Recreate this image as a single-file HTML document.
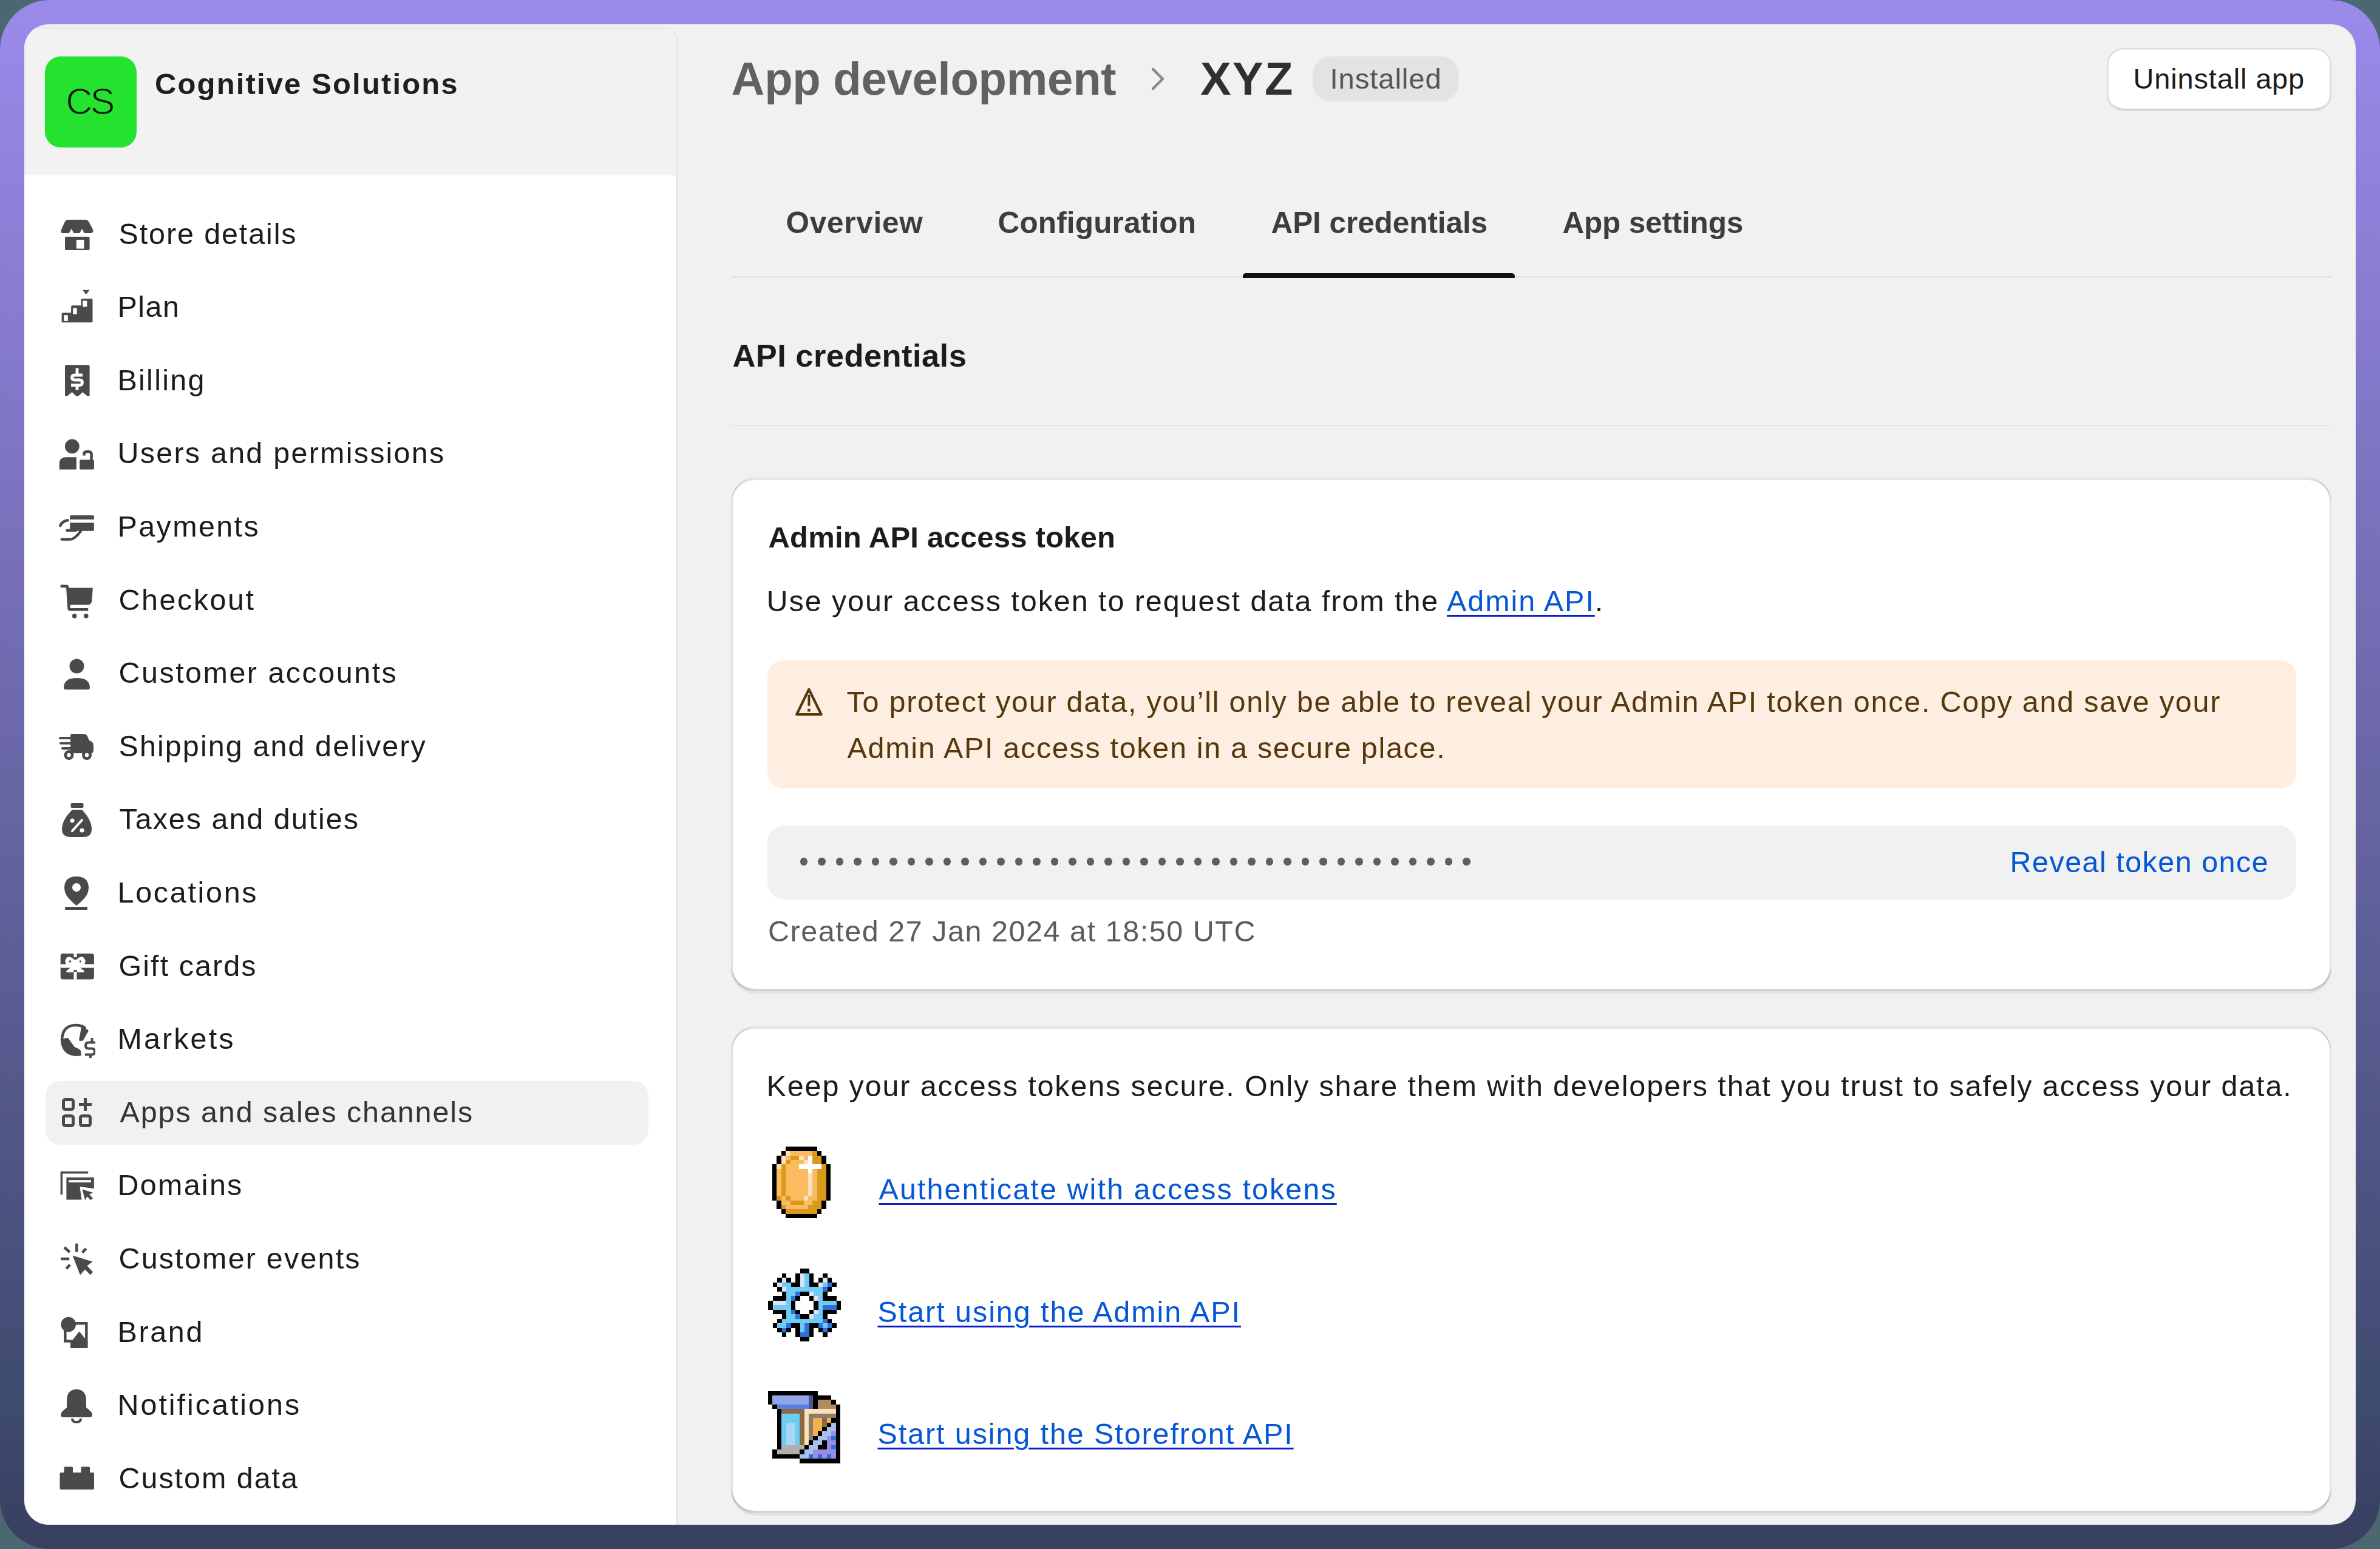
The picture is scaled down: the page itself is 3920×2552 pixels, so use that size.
<!DOCTYPE html>
<html><head><meta charset="utf-8"><title>API credentials</title>
<style>
html,body{margin:0;padding:0}
body{width:3920px;height:2552px;overflow:hidden;position:relative;background:#4b6870;font-family:"Liberation Sans", sans-serif}
.t{position:absolute;white-space:nowrap}
.abs{position:absolute}
</style></head><body>
<div class="abs" style="left:0;top:0;width:3920px;height:2552px;border-radius:82px;background:linear-gradient(#9b8aeb 0%,#6966a6 50%,#3e4a6e 91%,#383f5f 100%)"></div>
<div class="abs" style="left:40px;top:40px;width:3840px;height:2472px;border-radius:40px;background:#f1f1f1;overflow:hidden">
  <div class="abs" style="left:0;top:5px;width:1076px;height:2600px;border-radius:24px 24px 0 0;background:#ffffff;box-shadow:inset -2.5px 0 0 #e4e4e4, inset 0 2px 0 #e6e6e6"></div>
  <div class="abs" style="left:0;top:7px;width:1073.5px;height:241.5px;border-radius:23px 23px 0 0;background:#f2f2f2"></div>
  <div class="abs" style="left:35px;top:1741px;width:993px;height:105px;border-radius:24px;background:#f1f1f1"></div>
</div>
<div class="abs" style="left:74px;top:93px;width:151px;height:150px;border-radius:26px;background:#24e32e"></div>
<!-- header -->
<svg class="abs" style="left:1890px;top:108px" width="36" height="44" viewBox="0 0 36 44"><path d="M9,6 L25,22 L9,38" fill="none" stroke="#8a8a8a" stroke-width="4.5" stroke-linecap="round" stroke-linejoin="round"/></svg>
<div class="abs" style="left:2162px;top:93px;width:241px;height:74px;border-radius:30px;background:#e3e3e3"></div>
<div class="abs" style="left:3470px;top:79px;width:370px;height:104px;border-radius:28px;background:#ffffff;box-shadow:inset 0 0 0 2.5px #dcdcdc, inset 0 -4px 0 #c9c9c9"></div>
<!-- tabs -->
<div class="abs" style="left:1204px;top:455px;width:2636px;height:2.5px;background:#e6e6e6"></div>
<div class="abs" style="left:2046.5px;top:450px;width:448.5px;height:7.5px;border-radius:5px 5px 1px 1px;background:#111111"></div>
<div class="abs" style="left:1204px;top:700px;width:2636px;height:2px;background:#e6e6e6"></div>
<!-- card 1 -->
<div class="abs" style="left:1204px;top:787px;width:2636px;height:846px;border-radius:40px;background:#fff;box-shadow: inset 3px 0 0 rgba(0,0,0,.11), inset -3px 0 0 rgba(0,0,0,.11), inset 0 -4px 0 rgba(0,0,0,.17), inset 0 4px 0 rgba(0,0,0,.1), 0 4px 0 rgba(26,26,26,.07);"></div>
<div class="abs" style="left:1264px;top:1088px;width:2518px;height:211px;border-radius:26px;background:#feeee2"></div>
<svg class="abs" style="left:1300px;top:1125px" width="65" height="65" viewBox="0 0 65 65"><path d="M32.3,10.6 L52.6,52 L12.2,52Z" fill="none" stroke="#55380c" stroke-width="4.2" stroke-linejoin="round"/><path d="M32.4,19.7 L32.4,37.8" stroke="#55380c" stroke-width="4"/><rect x="30.1" y="42.8" width="4.6" height="4.6" fill="#55380c"/></svg>
<div class="abs" style="left:1264px;top:1360px;width:2518px;height:122px;border-radius:28px;background:#f1f1f1"></div>
<div style="position:absolute;left:1317.65px;top:1413.45px;width:12.5px;height:12.5px;border-radius:50%;background:#5e5e5e"></div><div style="position:absolute;left:1347.15px;top:1413.45px;width:12.5px;height:12.5px;border-radius:50%;background:#5e5e5e"></div><div style="position:absolute;left:1376.65px;top:1413.45px;width:12.5px;height:12.5px;border-radius:50%;background:#5e5e5e"></div><div style="position:absolute;left:1406.15px;top:1413.45px;width:12.5px;height:12.5px;border-radius:50%;background:#5e5e5e"></div><div style="position:absolute;left:1435.65px;top:1413.45px;width:12.5px;height:12.5px;border-radius:50%;background:#5e5e5e"></div><div style="position:absolute;left:1465.15px;top:1413.45px;width:12.5px;height:12.5px;border-radius:50%;background:#5e5e5e"></div><div style="position:absolute;left:1494.65px;top:1413.45px;width:12.5px;height:12.5px;border-radius:50%;background:#5e5e5e"></div><div style="position:absolute;left:1524.15px;top:1413.45px;width:12.5px;height:12.5px;border-radius:50%;background:#5e5e5e"></div><div style="position:absolute;left:1553.65px;top:1413.45px;width:12.5px;height:12.5px;border-radius:50%;background:#5e5e5e"></div><div style="position:absolute;left:1583.15px;top:1413.45px;width:12.5px;height:12.5px;border-radius:50%;background:#5e5e5e"></div><div style="position:absolute;left:1612.65px;top:1413.45px;width:12.5px;height:12.5px;border-radius:50%;background:#5e5e5e"></div><div style="position:absolute;left:1642.15px;top:1413.45px;width:12.5px;height:12.5px;border-radius:50%;background:#5e5e5e"></div><div style="position:absolute;left:1671.65px;top:1413.45px;width:12.5px;height:12.5px;border-radius:50%;background:#5e5e5e"></div><div style="position:absolute;left:1701.15px;top:1413.45px;width:12.5px;height:12.5px;border-radius:50%;background:#5e5e5e"></div><div style="position:absolute;left:1730.65px;top:1413.45px;width:12.5px;height:12.5px;border-radius:50%;background:#5e5e5e"></div><div style="position:absolute;left:1760.15px;top:1413.45px;width:12.5px;height:12.5px;border-radius:50%;background:#5e5e5e"></div><div style="position:absolute;left:1789.65px;top:1413.45px;width:12.5px;height:12.5px;border-radius:50%;background:#5e5e5e"></div><div style="position:absolute;left:1819.15px;top:1413.45px;width:12.5px;height:12.5px;border-radius:50%;background:#5e5e5e"></div><div style="position:absolute;left:1848.65px;top:1413.45px;width:12.5px;height:12.5px;border-radius:50%;background:#5e5e5e"></div><div style="position:absolute;left:1878.15px;top:1413.45px;width:12.5px;height:12.5px;border-radius:50%;background:#5e5e5e"></div><div style="position:absolute;left:1907.65px;top:1413.45px;width:12.5px;height:12.5px;border-radius:50%;background:#5e5e5e"></div><div style="position:absolute;left:1937.15px;top:1413.45px;width:12.5px;height:12.5px;border-radius:50%;background:#5e5e5e"></div><div style="position:absolute;left:1966.65px;top:1413.45px;width:12.5px;height:12.5px;border-radius:50%;background:#5e5e5e"></div><div style="position:absolute;left:1996.15px;top:1413.45px;width:12.5px;height:12.5px;border-radius:50%;background:#5e5e5e"></div><div style="position:absolute;left:2025.65px;top:1413.45px;width:12.5px;height:12.5px;border-radius:50%;background:#5e5e5e"></div><div style="position:absolute;left:2055.15px;top:1413.45px;width:12.5px;height:12.5px;border-radius:50%;background:#5e5e5e"></div><div style="position:absolute;left:2084.65px;top:1413.45px;width:12.5px;height:12.5px;border-radius:50%;background:#5e5e5e"></div><div style="position:absolute;left:2114.15px;top:1413.45px;width:12.5px;height:12.5px;border-radius:50%;background:#5e5e5e"></div><div style="position:absolute;left:2143.65px;top:1413.45px;width:12.5px;height:12.5px;border-radius:50%;background:#5e5e5e"></div><div style="position:absolute;left:2173.15px;top:1413.45px;width:12.5px;height:12.5px;border-radius:50%;background:#5e5e5e"></div><div style="position:absolute;left:2202.65px;top:1413.45px;width:12.5px;height:12.5px;border-radius:50%;background:#5e5e5e"></div><div style="position:absolute;left:2232.15px;top:1413.45px;width:12.5px;height:12.5px;border-radius:50%;background:#5e5e5e"></div><div style="position:absolute;left:2261.65px;top:1413.45px;width:12.5px;height:12.5px;border-radius:50%;background:#5e5e5e"></div><div style="position:absolute;left:2291.15px;top:1413.45px;width:12.5px;height:12.5px;border-radius:50%;background:#5e5e5e"></div><div style="position:absolute;left:2320.65px;top:1413.45px;width:12.5px;height:12.5px;border-radius:50%;background:#5e5e5e"></div><div style="position:absolute;left:2350.15px;top:1413.45px;width:12.5px;height:12.5px;border-radius:50%;background:#5e5e5e"></div><div style="position:absolute;left:2379.65px;top:1413.45px;width:12.5px;height:12.5px;border-radius:50%;background:#5e5e5e"></div><div style="position:absolute;left:2409.15px;top:1413.45px;width:12.5px;height:12.5px;border-radius:50%;background:#5e5e5e"></div>
<!-- card 2 -->
<div class="abs" style="left:1204px;top:1691px;width:2636px;height:802px;border-radius:40px;background:#fff;box-shadow: inset 3px 0 0 rgba(0,0,0,.11), inset -3px 0 0 rgba(0,0,0,.11), inset 0 -4px 0 rgba(0,0,0,.17), inset 0 4px 0 rgba(0,0,0,.1), 0 4px 0 rgba(26,26,26,.07);"></div>
<svg style="position:absolute;left:1272px;top:1888px" width="96" height="120" viewBox="0 0 13 16" shape-rendering="crispEdges"><rect x="3" y="0" width="1.02" height="1.02" fill="#000000"/><rect x="4" y="0" width="1.02" height="1.02" fill="#000000"/><rect x="5" y="0" width="1.02" height="1.02" fill="#000000"/><rect x="6" y="0" width="1.02" height="1.02" fill="#000000"/><rect x="7" y="0" width="1.02" height="1.02" fill="#000000"/><rect x="8" y="0" width="1.02" height="1.02" fill="#000000"/><rect x="9" y="0" width="1.02" height="1.02" fill="#000000"/><rect x="2" y="1" width="1.02" height="1.02" fill="#000000"/><rect x="3" y="1" width="1.02" height="1.02" fill="#fde3bd"/><rect x="4" y="1" width="1.02" height="1.02" fill="#fbbb5e"/><rect x="5" y="1" width="1.02" height="1.02" fill="#fbbb5e"/><rect x="6" y="1" width="1.02" height="1.02" fill="#fbbb5e"/><rect x="7" y="1" width="1.02" height="1.02" fill="#fbbb5e"/><rect x="8" y="1" width="1.02" height="1.02" fill="#fbbb5e"/><rect x="9" y="1" width="1.02" height="1.02" fill="#d99a1c"/><rect x="10" y="1" width="1.02" height="1.02" fill="#000000"/><rect x="1" y="2" width="1.02" height="1.02" fill="#000000"/><rect x="2" y="2" width="1.02" height="1.02" fill="#fde3bd"/><rect x="3" y="2" width="1.02" height="1.02" fill="#fbbb5e"/><rect x="4" y="2" width="1.02" height="1.02" fill="#d99a1c"/><rect x="5" y="2" width="1.02" height="1.02" fill="#d99a1c"/><rect x="6" y="2" width="1.02" height="1.02" fill="#fde3bd"/><rect x="7" y="2" width="1.02" height="1.02" fill="#fbbb5e"/><rect x="8" y="2" width="1.02" height="1.02" fill="#ffffff"/><rect x="9" y="2" width="1.02" height="1.02" fill="#d99a1c"/><rect x="10" y="2" width="1.02" height="1.02" fill="#d99a1c"/><rect x="11" y="2" width="1.02" height="1.02" fill="#000000"/><rect x="1" y="3" width="1.02" height="1.02" fill="#000000"/><rect x="2" y="3" width="1.02" height="1.02" fill="#fde3bd"/><rect x="3" y="3" width="1.02" height="1.02" fill="#d99a1c"/><rect x="4" y="3" width="1.02" height="1.02" fill="#fbbb5e"/><rect x="5" y="3" width="1.02" height="1.02" fill="#fbbb5e"/><rect x="6" y="3" width="1.02" height="1.02" fill="#fbbb5e"/><rect x="7" y="3" width="1.02" height="1.02" fill="#fde3bd"/><rect x="8" y="3" width="1.02" height="1.02" fill="#ffffff"/><rect x="9" y="3" width="1.02" height="1.02" fill="#d99a1c"/><rect x="10" y="3" width="1.02" height="1.02" fill="#d99a1c"/><rect x="11" y="3" width="1.02" height="1.02" fill="#000000"/><rect x="0" y="4" width="1.02" height="1.02" fill="#000000"/><rect x="1" y="4" width="1.02" height="1.02" fill="#fde3bd"/><rect x="2" y="4" width="1.02" height="1.02" fill="#d99a1c"/><rect x="3" y="4" width="1.02" height="1.02" fill="#fbbb5e"/><rect x="4" y="4" width="1.02" height="1.02" fill="#fbbb5e"/><rect x="5" y="4" width="1.02" height="1.02" fill="#fbbb5e"/><rect x="6" y="4" width="1.02" height="1.02" fill="#ffffff"/><rect x="7" y="4" width="1.02" height="1.02" fill="#ffffff"/><rect x="8" y="4" width="1.02" height="1.02" fill="#ffffff"/><rect x="9" y="4" width="1.02" height="1.02" fill="#ffffff"/><rect x="10" y="4" width="1.02" height="1.02" fill="#ffffff"/><rect x="11" y="4" width="1.02" height="1.02" fill="#d99a1c"/><rect x="12" y="4" width="1.02" height="1.02" fill="#000000"/><rect x="0" y="5" width="1.02" height="1.02" fill="#000000"/><rect x="1" y="5" width="1.02" height="1.02" fill="#fbbb5e"/><rect x="2" y="5" width="1.02" height="1.02" fill="#d99a1c"/><rect x="3" y="5" width="1.02" height="1.02" fill="#fbbb5e"/><rect x="4" y="5" width="1.02" height="1.02" fill="#fbbb5e"/><rect x="5" y="5" width="1.02" height="1.02" fill="#fbbb5e"/><rect x="6" y="5" width="1.02" height="1.02" fill="#fbbb5e"/><rect x="7" y="5" width="1.02" height="1.02" fill="#fbbb5e"/><rect x="8" y="5" width="1.02" height="1.02" fill="#ffffff"/><rect x="9" y="5" width="1.02" height="1.02" fill="#fbbb5e"/><rect x="10" y="5" width="1.02" height="1.02" fill="#d99a1c"/><rect x="11" y="5" width="1.02" height="1.02" fill="#d99a1c"/><rect x="12" y="5" width="1.02" height="1.02" fill="#000000"/><rect x="0" y="6" width="1.02" height="1.02" fill="#000000"/><rect x="1" y="6" width="1.02" height="1.02" fill="#fbbb5e"/><rect x="2" y="6" width="1.02" height="1.02" fill="#d99a1c"/><rect x="3" y="6" width="1.02" height="1.02" fill="#fbbb5e"/><rect x="4" y="6" width="1.02" height="1.02" fill="#fbbb5e"/><rect x="5" y="6" width="1.02" height="1.02" fill="#fbbb5e"/><rect x="6" y="6" width="1.02" height="1.02" fill="#fbbb5e"/><rect x="7" y="6" width="1.02" height="1.02" fill="#fbbb5e"/><rect x="8" y="6" width="1.02" height="1.02" fill="#fde3bd"/><rect x="9" y="6" width="1.02" height="1.02" fill="#fbbb5e"/><rect x="10" y="6" width="1.02" height="1.02" fill="#d99a1c"/><rect x="11" y="6" width="1.02" height="1.02" fill="#d99a1c"/><rect x="12" y="6" width="1.02" height="1.02" fill="#000000"/><rect x="0" y="7" width="1.02" height="1.02" fill="#000000"/><rect x="1" y="7" width="1.02" height="1.02" fill="#fbbb5e"/><rect x="2" y="7" width="1.02" height="1.02" fill="#d99a1c"/><rect x="3" y="7" width="1.02" height="1.02" fill="#fbbb5e"/><rect x="4" y="7" width="1.02" height="1.02" fill="#fbbb5e"/><rect x="5" y="7" width="1.02" height="1.02" fill="#fbbb5e"/><rect x="6" y="7" width="1.02" height="1.02" fill="#fbbb5e"/><rect x="7" y="7" width="1.02" height="1.02" fill="#fbbb5e"/><rect x="8" y="7" width="1.02" height="1.02" fill="#fde3bd"/><rect x="9" y="7" width="1.02" height="1.02" fill="#fbbb5e"/><rect x="10" y="7" width="1.02" height="1.02" fill="#d99a1c"/><rect x="11" y="7" width="1.02" height="1.02" fill="#d99a1c"/><rect x="12" y="7" width="1.02" height="1.02" fill="#000000"/><rect x="0" y="8" width="1.02" height="1.02" fill="#000000"/><rect x="1" y="8" width="1.02" height="1.02" fill="#fbbb5e"/><rect x="2" y="8" width="1.02" height="1.02" fill="#d99a1c"/><rect x="3" y="8" width="1.02" height="1.02" fill="#fbbb5e"/><rect x="4" y="8" width="1.02" height="1.02" fill="#fbbb5e"/><rect x="5" y="8" width="1.02" height="1.02" fill="#fbbb5e"/><rect x="6" y="8" width="1.02" height="1.02" fill="#fbbb5e"/><rect x="7" y="8" width="1.02" height="1.02" fill="#fbbb5e"/><rect x="8" y="8" width="1.02" height="1.02" fill="#fde3bd"/><rect x="9" y="8" width="1.02" height="1.02" fill="#fbbb5e"/><rect x="10" y="8" width="1.02" height="1.02" fill="#d99a1c"/><rect x="11" y="8" width="1.02" height="1.02" fill="#d99a1c"/><rect x="12" y="8" width="1.02" height="1.02" fill="#000000"/><rect x="0" y="9" width="1.02" height="1.02" fill="#000000"/><rect x="1" y="9" width="1.02" height="1.02" fill="#fbbb5e"/><rect x="2" y="9" width="1.02" height="1.02" fill="#d99a1c"/><rect x="3" y="9" width="1.02" height="1.02" fill="#fbbb5e"/><rect x="4" y="9" width="1.02" height="1.02" fill="#fbbb5e"/><rect x="5" y="9" width="1.02" height="1.02" fill="#fbbb5e"/><rect x="6" y="9" width="1.02" height="1.02" fill="#fbbb5e"/><rect x="7" y="9" width="1.02" height="1.02" fill="#fbbb5e"/><rect x="8" y="9" width="1.02" height="1.02" fill="#fde3bd"/><rect x="9" y="9" width="1.02" height="1.02" fill="#fbbb5e"/><rect x="10" y="9" width="1.02" height="1.02" fill="#d99a1c"/><rect x="11" y="9" width="1.02" height="1.02" fill="#d99a1c"/><rect x="12" y="9" width="1.02" height="1.02" fill="#000000"/><rect x="0" y="10" width="1.02" height="1.02" fill="#000000"/><rect x="1" y="10" width="1.02" height="1.02" fill="#fbbb5e"/><rect x="2" y="10" width="1.02" height="1.02" fill="#d99a1c"/><rect x="3" y="10" width="1.02" height="1.02" fill="#fbbb5e"/><rect x="4" y="10" width="1.02" height="1.02" fill="#fbbb5e"/><rect x="5" y="10" width="1.02" height="1.02" fill="#fbbb5e"/><rect x="6" y="10" width="1.02" height="1.02" fill="#fbbb5e"/><rect x="7" y="10" width="1.02" height="1.02" fill="#fbbb5e"/><rect x="8" y="10" width="1.02" height="1.02" fill="#fde3bd"/><rect x="9" y="10" width="1.02" height="1.02" fill="#fbbb5e"/><rect x="10" y="10" width="1.02" height="1.02" fill="#d99a1c"/><rect x="11" y="10" width="1.02" height="1.02" fill="#d99a1c"/><rect x="12" y="10" width="1.02" height="1.02" fill="#000000"/><rect x="0" y="11" width="1.02" height="1.02" fill="#000000"/><rect x="1" y="11" width="1.02" height="1.02" fill="#d99a1c"/><rect x="2" y="11" width="1.02" height="1.02" fill="#fbbb5e"/><rect x="3" y="11" width="1.02" height="1.02" fill="#d99a1c"/><rect x="4" y="11" width="1.02" height="1.02" fill="#fbbb5e"/><rect x="5" y="11" width="1.02" height="1.02" fill="#fbbb5e"/><rect x="6" y="11" width="1.02" height="1.02" fill="#fbbb5e"/><rect x="7" y="11" width="1.02" height="1.02" fill="#fde3bd"/><rect x="8" y="11" width="1.02" height="1.02" fill="#fbbb5e"/><rect x="9" y="11" width="1.02" height="1.02" fill="#fbbb5e"/><rect x="10" y="11" width="1.02" height="1.02" fill="#d99a1c"/><rect x="11" y="11" width="1.02" height="1.02" fill="#d99a1c"/><rect x="12" y="11" width="1.02" height="1.02" fill="#000000"/><rect x="1" y="12" width="1.02" height="1.02" fill="#000000"/><rect x="2" y="12" width="1.02" height="1.02" fill="#fbbb5e"/><rect x="3" y="12" width="1.02" height="1.02" fill="#fbbb5e"/><rect x="4" y="12" width="1.02" height="1.02" fill="#d99a1c"/><rect x="5" y="12" width="1.02" height="1.02" fill="#d99a1c"/><rect x="6" y="12" width="1.02" height="1.02" fill="#d99a1c"/><rect x="7" y="12" width="1.02" height="1.02" fill="#fbbb5e"/><rect x="8" y="12" width="1.02" height="1.02" fill="#fbbb5e"/><rect x="9" y="12" width="1.02" height="1.02" fill="#d99a1c"/><rect x="10" y="12" width="1.02" height="1.02" fill="#d99a1c"/><rect x="11" y="12" width="1.02" height="1.02" fill="#000000"/><rect x="1" y="13" width="1.02" height="1.02" fill="#000000"/><rect x="2" y="13" width="1.02" height="1.02" fill="#d99a1c"/><rect x="3" y="13" width="1.02" height="1.02" fill="#fbbb5e"/><rect x="4" y="13" width="1.02" height="1.02" fill="#fbbb5e"/><rect x="5" y="13" width="1.02" height="1.02" fill="#fbbb5e"/><rect x="6" y="13" width="1.02" height="1.02" fill="#fbbb5e"/><rect x="7" y="13" width="1.02" height="1.02" fill="#fbbb5e"/><rect x="8" y="13" width="1.02" height="1.02" fill="#d99a1c"/><rect x="9" y="13" width="1.02" height="1.02" fill="#d99a1c"/><rect x="10" y="13" width="1.02" height="1.02" fill="#d99a1c"/><rect x="11" y="13" width="1.02" height="1.02" fill="#000000"/><rect x="2" y="14" width="1.02" height="1.02" fill="#000000"/><rect x="3" y="14" width="1.02" height="1.02" fill="#d99a1c"/><rect x="4" y="14" width="1.02" height="1.02" fill="#d99a1c"/><rect x="5" y="14" width="1.02" height="1.02" fill="#d99a1c"/><rect x="6" y="14" width="1.02" height="1.02" fill="#d99a1c"/><rect x="7" y="14" width="1.02" height="1.02" fill="#d99a1c"/><rect x="8" y="14" width="1.02" height="1.02" fill="#d99a1c"/><rect x="9" y="14" width="1.02" height="1.02" fill="#d99a1c"/><rect x="10" y="14" width="1.02" height="1.02" fill="#000000"/><rect x="3" y="15" width="1.02" height="1.02" fill="#000000"/><rect x="4" y="15" width="1.02" height="1.02" fill="#000000"/><rect x="5" y="15" width="1.02" height="1.02" fill="#000000"/><rect x="6" y="15" width="1.02" height="1.02" fill="#000000"/><rect x="7" y="15" width="1.02" height="1.02" fill="#000000"/><rect x="8" y="15" width="1.02" height="1.02" fill="#000000"/><rect x="9" y="15" width="1.02" height="1.02" fill="#000000"/></svg>
<svg style="position:absolute;left:1265px;top:2090px" width="120" height="120" viewBox="0 0 16 16" shape-rendering="crispEdges"><rect x="7" y="0" width="1.02" height="1.02" fill="#000000"/><rect x="8" y="0" width="1.02" height="1.02" fill="#000000"/><rect x="3" y="1" width="1.02" height="1.02" fill="#000000"/><rect x="6" y="1" width="1.02" height="1.02" fill="#000000"/><rect x="7" y="1" width="1.02" height="1.02" fill="#dfe2f7"/><rect x="8" y="1" width="1.02" height="1.02" fill="#6ecbf5"/><rect x="9" y="1" width="1.02" height="1.02" fill="#000000"/><rect x="12" y="1" width="1.02" height="1.02" fill="#000000"/><rect x="2" y="2" width="1.02" height="1.02" fill="#000000"/><rect x="3" y="2" width="1.02" height="1.02" fill="#dfe2f7"/><rect x="4" y="2" width="1.02" height="1.02" fill="#000000"/><rect x="6" y="2" width="1.02" height="1.02" fill="#000000"/><rect x="7" y="2" width="1.02" height="1.02" fill="#dfe2f7"/><rect x="8" y="2" width="1.02" height="1.02" fill="#6ecbf5"/><rect x="9" y="2" width="1.02" height="1.02" fill="#000000"/><rect x="11" y="2" width="1.02" height="1.02" fill="#000000"/><rect x="12" y="2" width="1.02" height="1.02" fill="#dfe2f7"/><rect x="13" y="2" width="1.02" height="1.02" fill="#000000"/><rect x="1" y="3" width="1.02" height="1.02" fill="#000000"/><rect x="2" y="3" width="1.02" height="1.02" fill="#dfe2f7"/><rect x="3" y="3" width="1.02" height="1.02" fill="#6ecbf5"/><rect x="4" y="3" width="1.02" height="1.02" fill="#6ecbf5"/><rect x="5" y="3" width="1.02" height="1.02" fill="#000000"/><rect x="6" y="3" width="1.02" height="1.02" fill="#000000"/><rect x="7" y="3" width="1.02" height="1.02" fill="#dfe2f7"/><rect x="8" y="3" width="1.02" height="1.02" fill="#6ecbf5"/><rect x="9" y="3" width="1.02" height="1.02" fill="#000000"/><rect x="10" y="3" width="1.02" height="1.02" fill="#000000"/><rect x="11" y="3" width="1.02" height="1.02" fill="#dfe2f7"/><rect x="12" y="3" width="1.02" height="1.02" fill="#6ecbf5"/><rect x="13" y="3" width="1.02" height="1.02" fill="#2f70d8"/><rect x="14" y="3" width="1.02" height="1.02" fill="#000000"/><rect x="2" y="4" width="1.02" height="1.02" fill="#000000"/><rect x="3" y="4" width="1.02" height="1.02" fill="#dfe2f7"/><rect x="4" y="4" width="1.02" height="1.02" fill="#6ecbf5"/><rect x="5" y="4" width="1.02" height="1.02" fill="#6ecbf5"/><rect x="6" y="4" width="1.02" height="1.02" fill="#6ecbf5"/><rect x="7" y="4" width="1.02" height="1.02" fill="#6ecbf5"/><rect x="8" y="4" width="1.02" height="1.02" fill="#6ecbf5"/><rect x="9" y="4" width="1.02" height="1.02" fill="#6ecbf5"/><rect x="10" y="4" width="1.02" height="1.02" fill="#6ecbf5"/><rect x="11" y="4" width="1.02" height="1.02" fill="#6ecbf5"/><rect x="12" y="4" width="1.02" height="1.02" fill="#2f70d8"/><rect x="13" y="4" width="1.02" height="1.02" fill="#000000"/><rect x="3" y="5" width="1.02" height="1.02" fill="#000000"/><rect x="4" y="5" width="1.02" height="1.02" fill="#6ecbf5"/><rect x="5" y="5" width="1.02" height="1.02" fill="#6ecbf5"/><rect x="6" y="5" width="1.02" height="1.02" fill="#2f70d8"/><rect x="7" y="5" width="1.02" height="1.02" fill="#000000"/><rect x="8" y="5" width="1.02" height="1.02" fill="#000000"/><rect x="9" y="5" width="1.02" height="1.02" fill="#dfe2f7"/><rect x="10" y="5" width="1.02" height="1.02" fill="#6ecbf5"/><rect x="11" y="5" width="1.02" height="1.02" fill="#6ecbf5"/><rect x="12" y="5" width="1.02" height="1.02" fill="#000000"/><rect x="1" y="6" width="1.02" height="1.02" fill="#000000"/><rect x="2" y="6" width="1.02" height="1.02" fill="#000000"/><rect x="3" y="6" width="1.02" height="1.02" fill="#000000"/><rect x="4" y="6" width="1.02" height="1.02" fill="#6ecbf5"/><rect x="5" y="6" width="1.02" height="1.02" fill="#2f70d8"/><rect x="6" y="6" width="1.02" height="1.02" fill="#000000"/><rect x="7" y="6" width="1.02" height="1.02" fill="#ffffff"/><rect x="8" y="6" width="1.02" height="1.02" fill="#ffffff"/><rect x="9" y="6" width="1.02" height="1.02" fill="#000000"/><rect x="10" y="6" width="1.02" height="1.02" fill="#dfe2f7"/><rect x="11" y="6" width="1.02" height="1.02" fill="#6ecbf5"/><rect x="12" y="6" width="1.02" height="1.02" fill="#000000"/><rect x="13" y="6" width="1.02" height="1.02" fill="#000000"/><rect x="14" y="6" width="1.02" height="1.02" fill="#000000"/><rect x="0" y="7" width="1.02" height="1.02" fill="#000000"/><rect x="1" y="7" width="1.02" height="1.02" fill="#dfe2f7"/><rect x="2" y="7" width="1.02" height="1.02" fill="#dfe2f7"/><rect x="3" y="7" width="1.02" height="1.02" fill="#dfe2f7"/><rect x="4" y="7" width="1.02" height="1.02" fill="#6ecbf5"/><rect x="5" y="7" width="1.02" height="1.02" fill="#000000"/><rect x="6" y="7" width="1.02" height="1.02" fill="#ffffff"/><rect x="7" y="7" width="1.02" height="1.02" fill="#ffffff"/><rect x="8" y="7" width="1.02" height="1.02" fill="#ffffff"/><rect x="9" y="7" width="1.02" height="1.02" fill="#ffffff"/><rect x="10" y="7" width="1.02" height="1.02" fill="#000000"/><rect x="11" y="7" width="1.02" height="1.02" fill="#6ecbf5"/><rect x="12" y="7" width="1.02" height="1.02" fill="#6ecbf5"/><rect x="13" y="7" width="1.02" height="1.02" fill="#6ecbf5"/><rect x="14" y="7" width="1.02" height="1.02" fill="#6ecbf5"/><rect x="15" y="7" width="1.02" height="1.02" fill="#000000"/><rect x="0" y="8" width="1.02" height="1.02" fill="#000000"/><rect x="1" y="8" width="1.02" height="1.02" fill="#6ecbf5"/><rect x="2" y="8" width="1.02" height="1.02" fill="#6ecbf5"/><rect x="3" y="8" width="1.02" height="1.02" fill="#6ecbf5"/><rect x="4" y="8" width="1.02" height="1.02" fill="#6ecbf5"/><rect x="5" y="8" width="1.02" height="1.02" fill="#000000"/><rect x="6" y="8" width="1.02" height="1.02" fill="#ffffff"/><rect x="7" y="8" width="1.02" height="1.02" fill="#ffffff"/><rect x="8" y="8" width="1.02" height="1.02" fill="#ffffff"/><rect x="9" y="8" width="1.02" height="1.02" fill="#ffffff"/><rect x="10" y="8" width="1.02" height="1.02" fill="#000000"/><rect x="11" y="8" width="1.02" height="1.02" fill="#6ecbf5"/><rect x="12" y="8" width="1.02" height="1.02" fill="#2f70d8"/><rect x="13" y="8" width="1.02" height="1.02" fill="#2f70d8"/><rect x="14" y="8" width="1.02" height="1.02" fill="#2f70d8"/><rect x="15" y="8" width="1.02" height="1.02" fill="#000000"/><rect x="1" y="9" width="1.02" height="1.02" fill="#000000"/><rect x="2" y="9" width="1.02" height="1.02" fill="#000000"/><rect x="3" y="9" width="1.02" height="1.02" fill="#000000"/><rect x="4" y="9" width="1.02" height="1.02" fill="#6ecbf5"/><rect x="5" y="9" width="1.02" height="1.02" fill="#2f70d8"/><rect x="6" y="9" width="1.02" height="1.02" fill="#000000"/><rect x="7" y="9" width="1.02" height="1.02" fill="#ffffff"/><rect x="8" y="9" width="1.02" height="1.02" fill="#ffffff"/><rect x="9" y="9" width="1.02" height="1.02" fill="#000000"/><rect x="10" y="9" width="1.02" height="1.02" fill="#dfe2f7"/><rect x="11" y="9" width="1.02" height="1.02" fill="#6ecbf5"/><rect x="12" y="9" width="1.02" height="1.02" fill="#000000"/><rect x="13" y="9" width="1.02" height="1.02" fill="#000000"/><rect x="14" y="9" width="1.02" height="1.02" fill="#000000"/><rect x="3" y="10" width="1.02" height="1.02" fill="#000000"/><rect x="4" y="10" width="1.02" height="1.02" fill="#6ecbf5"/><rect x="5" y="10" width="1.02" height="1.02" fill="#6ecbf5"/><rect x="6" y="10" width="1.02" height="1.02" fill="#2f70d8"/><rect x="7" y="10" width="1.02" height="1.02" fill="#000000"/><rect x="8" y="10" width="1.02" height="1.02" fill="#000000"/><rect x="9" y="10" width="1.02" height="1.02" fill="#dfe2f7"/><rect x="10" y="10" width="1.02" height="1.02" fill="#6ecbf5"/><rect x="11" y="10" width="1.02" height="1.02" fill="#6ecbf5"/><rect x="12" y="10" width="1.02" height="1.02" fill="#000000"/><rect x="2" y="11" width="1.02" height="1.02" fill="#000000"/><rect x="3" y="11" width="1.02" height="1.02" fill="#6ecbf5"/><rect x="4" y="11" width="1.02" height="1.02" fill="#6ecbf5"/><rect x="5" y="11" width="1.02" height="1.02" fill="#6ecbf5"/><rect x="6" y="11" width="1.02" height="1.02" fill="#6ecbf5"/><rect x="7" y="11" width="1.02" height="1.02" fill="#6ecbf5"/><rect x="8" y="11" width="1.02" height="1.02" fill="#6ecbf5"/><rect x="9" y="11" width="1.02" height="1.02" fill="#6ecbf5"/><rect x="10" y="11" width="1.02" height="1.02" fill="#6ecbf5"/><rect x="11" y="11" width="1.02" height="1.02" fill="#6ecbf5"/><rect x="12" y="11" width="1.02" height="1.02" fill="#2f70d8"/><rect x="13" y="11" width="1.02" height="1.02" fill="#000000"/><rect x="1" y="12" width="1.02" height="1.02" fill="#000000"/><rect x="2" y="12" width="1.02" height="1.02" fill="#6ecbf5"/><rect x="3" y="12" width="1.02" height="1.02" fill="#6ecbf5"/><rect x="4" y="12" width="1.02" height="1.02" fill="#2f70d8"/><rect x="5" y="12" width="1.02" height="1.02" fill="#000000"/><rect x="6" y="12" width="1.02" height="1.02" fill="#000000"/><rect x="7" y="12" width="1.02" height="1.02" fill="#6ecbf5"/><rect x="8" y="12" width="1.02" height="1.02" fill="#2f70d8"/><rect x="9" y="12" width="1.02" height="1.02" fill="#000000"/><rect x="10" y="12" width="1.02" height="1.02" fill="#000000"/><rect x="11" y="12" width="1.02" height="1.02" fill="#2f70d8"/><rect x="12" y="12" width="1.02" height="1.02" fill="#6ecbf5"/><rect x="13" y="12" width="1.02" height="1.02" fill="#2f70d8"/><rect x="14" y="12" width="1.02" height="1.02" fill="#000000"/><rect x="2" y="13" width="1.02" height="1.02" fill="#000000"/><rect x="3" y="13" width="1.02" height="1.02" fill="#2f70d8"/><rect x="4" y="13" width="1.02" height="1.02" fill="#000000"/><rect x="6" y="13" width="1.02" height="1.02" fill="#000000"/><rect x="7" y="13" width="1.02" height="1.02" fill="#6ecbf5"/><rect x="8" y="13" width="1.02" height="1.02" fill="#2f70d8"/><rect x="9" y="13" width="1.02" height="1.02" fill="#000000"/><rect x="11" y="13" width="1.02" height="1.02" fill="#000000"/><rect x="12" y="13" width="1.02" height="1.02" fill="#2f70d8"/><rect x="13" y="13" width="1.02" height="1.02" fill="#000000"/><rect x="3" y="14" width="1.02" height="1.02" fill="#000000"/><rect x="6" y="14" width="1.02" height="1.02" fill="#000000"/><rect x="7" y="14" width="1.02" height="1.02" fill="#2f70d8"/><rect x="8" y="14" width="1.02" height="1.02" fill="#2f70d8"/><rect x="9" y="14" width="1.02" height="1.02" fill="#000000"/><rect x="12" y="14" width="1.02" height="1.02" fill="#000000"/><rect x="7" y="15" width="1.02" height="1.02" fill="#000000"/><rect x="8" y="15" width="1.02" height="1.02" fill="#000000"/></svg>
<svg style="position:absolute;left:1265px;top:2291px" width="119" height="120" viewBox="0 0 16 16" shape-rendering="crispEdges"><rect x="0" y="0" width="1.02" height="1.02" fill="#000000"/><rect x="1" y="0" width="1.02" height="1.02" fill="#000000"/><rect x="2" y="0" width="1.02" height="1.02" fill="#000000"/><rect x="3" y="0" width="1.02" height="1.02" fill="#000000"/><rect x="4" y="0" width="1.02" height="1.02" fill="#000000"/><rect x="5" y="0" width="1.02" height="1.02" fill="#000000"/><rect x="6" y="0" width="1.02" height="1.02" fill="#000000"/><rect x="7" y="0" width="1.02" height="1.02" fill="#000000"/><rect x="8" y="0" width="1.02" height="1.02" fill="#000000"/><rect x="9" y="0" width="1.02" height="1.02" fill="#000000"/><rect x="10" y="0" width="1.02" height="1.02" fill="#000000"/><rect x="0" y="1" width="1.02" height="1.02" fill="#000000"/><rect x="1" y="1" width="1.02" height="1.02" fill="#8fa6ea"/><rect x="2" y="1" width="1.02" height="1.02" fill="#8fa6ea"/><rect x="3" y="1" width="1.02" height="1.02" fill="#8fa6ea"/><rect x="4" y="1" width="1.02" height="1.02" fill="#8fa6ea"/><rect x="5" y="1" width="1.02" height="1.02" fill="#8fa6ea"/><rect x="6" y="1" width="1.02" height="1.02" fill="#8fa6ea"/><rect x="7" y="1" width="1.02" height="1.02" fill="#8fa6ea"/><rect x="8" y="1" width="1.02" height="1.02" fill="#8fa6ea"/><rect x="9" y="1" width="1.02" height="1.02" fill="#4b5894"/><rect x="10" y="1" width="1.02" height="1.02" fill="#000000"/><rect x="11" y="1" width="1.02" height="1.02" fill="#000000"/><rect x="12" y="1" width="1.02" height="1.02" fill="#000000"/><rect x="13" y="1" width="1.02" height="1.02" fill="#000000"/><rect x="0" y="2" width="1.02" height="1.02" fill="#000000"/><rect x="1" y="2" width="1.02" height="1.02" fill="#8fa6ea"/><rect x="2" y="2" width="1.02" height="1.02" fill="#8fa6ea"/><rect x="3" y="2" width="1.02" height="1.02" fill="#8fa6ea"/><rect x="4" y="2" width="1.02" height="1.02" fill="#8fa6ea"/><rect x="5" y="2" width="1.02" height="1.02" fill="#8fa6ea"/><rect x="6" y="2" width="1.02" height="1.02" fill="#8fa6ea"/><rect x="7" y="2" width="1.02" height="1.02" fill="#8fa6ea"/><rect x="8" y="2" width="1.02" height="1.02" fill="#8fa6ea"/><rect x="9" y="2" width="1.02" height="1.02" fill="#4b5894"/><rect x="10" y="2" width="1.02" height="1.02" fill="#000000"/><rect x="11" y="2" width="1.02" height="1.02" fill="#b08c62"/><rect x="12" y="2" width="1.02" height="1.02" fill="#b08c62"/><rect x="13" y="2" width="1.02" height="1.02" fill="#b08c62"/><rect x="14" y="2" width="1.02" height="1.02" fill="#000000"/><rect x="1" y="3" width="1.02" height="1.02" fill="#000000"/><rect x="2" y="3" width="1.02" height="1.02" fill="#5a80e0"/><rect x="3" y="3" width="1.02" height="1.02" fill="#5a80e0"/><rect x="4" y="3" width="1.02" height="1.02" fill="#5a80e0"/><rect x="5" y="3" width="1.02" height="1.02" fill="#5a80e0"/><rect x="6" y="3" width="1.02" height="1.02" fill="#5a80e0"/><rect x="7" y="3" width="1.02" height="1.02" fill="#5a80e0"/><rect x="8" y="3" width="1.02" height="1.02" fill="#5a80e0"/><rect x="9" y="3" width="1.02" height="1.02" fill="#4b5894"/><rect x="10" y="3" width="1.02" height="1.02" fill="#000000"/><rect x="11" y="3" width="1.02" height="1.02" fill="#b08c62"/><rect x="12" y="3" width="1.02" height="1.02" fill="#b08c62"/><rect x="13" y="3" width="1.02" height="1.02" fill="#b08c62"/><rect x="14" y="3" width="1.02" height="1.02" fill="#b08c62"/><rect x="15" y="3" width="1.02" height="1.02" fill="#000000"/><rect x="2" y="4" width="1.02" height="1.02" fill="#000000"/><rect x="3" y="4" width="1.02" height="1.02" fill="#8a6a44"/><rect x="4" y="4" width="1.02" height="1.02" fill="#8a6a44"/><rect x="5" y="4" width="1.02" height="1.02" fill="#8a6a44"/><rect x="6" y="4" width="1.02" height="1.02" fill="#8a6a44"/><rect x="7" y="4" width="1.02" height="1.02" fill="#8a6a44"/><rect x="8" y="4" width="1.02" height="1.02" fill="#fde0b8"/><rect x="9" y="4" width="1.02" height="1.02" fill="#fde0b8"/><rect x="10" y="4" width="1.02" height="1.02" fill="#fde0b8"/><rect x="11" y="4" width="1.02" height="1.02" fill="#fde0b8"/><rect x="12" y="4" width="1.02" height="1.02" fill="#fde0b8"/><rect x="13" y="4" width="1.02" height="1.02" fill="#fde0b8"/><rect x="14" y="4" width="1.02" height="1.02" fill="#fde0b8"/><rect x="15" y="4" width="1.02" height="1.02" fill="#000000"/><rect x="2" y="5" width="1.02" height="1.02" fill="#000000"/><rect x="3" y="5" width="1.02" height="1.02" fill="#6ecbf5"/><rect x="4" y="5" width="1.02" height="1.02" fill="#6ecbf5"/><rect x="5" y="5" width="1.02" height="1.02" fill="#6ecbf5"/><rect x="6" y="5" width="1.02" height="1.02" fill="#6ecbf5"/><rect x="7" y="5" width="1.02" height="1.02" fill="#8a6a44"/><rect x="8" y="5" width="1.02" height="1.02" fill="#fde0b8"/><rect x="9" y="5" width="1.02" height="1.02" fill="#8c7c6a"/><rect x="10" y="5" width="1.02" height="1.02" fill="#8c7c6a"/><rect x="11" y="5" width="1.02" height="1.02" fill="#8c7c6a"/><rect x="12" y="5" width="1.02" height="1.02" fill="#8c7c6a"/><rect x="13" y="5" width="1.02" height="1.02" fill="#8c7c6a"/><rect x="14" y="5" width="1.02" height="1.02" fill="#8c7c6a"/><rect x="15" y="5" width="1.02" height="1.02" fill="#000000"/><rect x="2" y="6" width="1.02" height="1.02" fill="#000000"/><rect x="3" y="6" width="1.02" height="1.02" fill="#6ecbf5"/><rect x="4" y="6" width="1.02" height="1.02" fill="#6ecbf5"/><rect x="5" y="6" width="1.02" height="1.02" fill="#6ecbf5"/><rect x="6" y="6" width="1.02" height="1.02" fill="#6ecbf5"/><rect x="7" y="6" width="1.02" height="1.02" fill="#8a6a44"/><rect x="8" y="6" width="1.02" height="1.02" fill="#fde0b8"/><rect x="9" y="6" width="1.02" height="1.02" fill="#8c7c6a"/><rect x="10" y="6" width="1.02" height="1.02" fill="#f6b050"/><rect x="11" y="6" width="1.02" height="1.02" fill="#f6b050"/><rect x="12" y="6" width="1.02" height="1.02" fill="#8a6a44"/><rect x="13" y="6" width="1.02" height="1.02" fill="#f6b050"/><rect x="14" y="6" width="1.02" height="1.02" fill="#000000"/><rect x="15" y="6" width="1.02" height="1.02" fill="#000000"/><rect x="2" y="7" width="1.02" height="1.02" fill="#000000"/><rect x="3" y="7" width="1.02" height="1.02" fill="#6ecbf5"/><rect x="4" y="7" width="1.02" height="1.02" fill="#a6d8f2"/><rect x="5" y="7" width="1.02" height="1.02" fill="#a6d8f2"/><rect x="6" y="7" width="1.02" height="1.02" fill="#6ecbf5"/><rect x="7" y="7" width="1.02" height="1.02" fill="#8a6a44"/><rect x="8" y="7" width="1.02" height="1.02" fill="#fde0b8"/><rect x="9" y="7" width="1.02" height="1.02" fill="#8c7c6a"/><rect x="10" y="7" width="1.02" height="1.02" fill="#f6b050"/><rect x="11" y="7" width="1.02" height="1.02" fill="#f6b050"/><rect x="12" y="7" width="1.02" height="1.02" fill="#8a6a44"/><rect x="13" y="7" width="1.02" height="1.02" fill="#000000"/><rect x="14" y="7" width="1.02" height="1.02" fill="#a9c0ec"/><rect x="15" y="7" width="1.02" height="1.02" fill="#000000"/><rect x="2" y="8" width="1.02" height="1.02" fill="#000000"/><rect x="3" y="8" width="1.02" height="1.02" fill="#6ecbf5"/><rect x="4" y="8" width="1.02" height="1.02" fill="#a6d8f2"/><rect x="5" y="8" width="1.02" height="1.02" fill="#a6d8f2"/><rect x="6" y="8" width="1.02" height="1.02" fill="#6ecbf5"/><rect x="7" y="8" width="1.02" height="1.02" fill="#8a6a44"/><rect x="8" y="8" width="1.02" height="1.02" fill="#fde0b8"/><rect x="9" y="8" width="1.02" height="1.02" fill="#8c7c6a"/><rect x="10" y="8" width="1.02" height="1.02" fill="#f6b050"/><rect x="11" y="8" width="1.02" height="1.02" fill="#f6b050"/><rect x="12" y="8" width="1.02" height="1.02" fill="#000000"/><rect x="13" y="8" width="1.02" height="1.02" fill="#a9c0ec"/><rect x="14" y="8" width="1.02" height="1.02" fill="#a9c0ec"/><rect x="15" y="8" width="1.02" height="1.02" fill="#000000"/><rect x="2" y="9" width="1.02" height="1.02" fill="#000000"/><rect x="3" y="9" width="1.02" height="1.02" fill="#6ecbf5"/><rect x="4" y="9" width="1.02" height="1.02" fill="#a6d8f2"/><rect x="5" y="9" width="1.02" height="1.02" fill="#a6d8f2"/><rect x="6" y="9" width="1.02" height="1.02" fill="#6ecbf5"/><rect x="7" y="9" width="1.02" height="1.02" fill="#8a6a44"/><rect x="8" y="9" width="1.02" height="1.02" fill="#fde0b8"/><rect x="9" y="9" width="1.02" height="1.02" fill="#8c7c6a"/><rect x="10" y="9" width="1.02" height="1.02" fill="#f6b050"/><rect x="11" y="9" width="1.02" height="1.02" fill="#000000"/><rect x="12" y="9" width="1.02" height="1.02" fill="#a9c0ec"/><rect x="13" y="9" width="1.02" height="1.02" fill="#a9c0ec"/><rect x="14" y="9" width="1.02" height="1.02" fill="#9a8ee0"/><rect x="15" y="9" width="1.02" height="1.02" fill="#000000"/><rect x="2" y="10" width="1.02" height="1.02" fill="#000000"/><rect x="3" y="10" width="1.02" height="1.02" fill="#6ecbf5"/><rect x="4" y="10" width="1.02" height="1.02" fill="#a6d8f2"/><rect x="5" y="10" width="1.02" height="1.02" fill="#a6d8f2"/><rect x="6" y="10" width="1.02" height="1.02" fill="#6ecbf5"/><rect x="7" y="10" width="1.02" height="1.02" fill="#8a6a44"/><rect x="8" y="10" width="1.02" height="1.02" fill="#fde0b8"/><rect x="9" y="10" width="1.02" height="1.02" fill="#8c7c6a"/><rect x="10" y="10" width="1.02" height="1.02" fill="#000000"/><rect x="11" y="10" width="1.02" height="1.02" fill="#a9c0ec"/><rect x="12" y="10" width="1.02" height="1.02" fill="#a9c0ec"/><rect x="13" y="10" width="1.02" height="1.02" fill="#9a8ee0"/><rect x="14" y="10" width="1.02" height="1.02" fill="#2f6fd8"/><rect x="15" y="10" width="1.02" height="1.02" fill="#000000"/><rect x="2" y="11" width="1.02" height="1.02" fill="#000000"/><rect x="3" y="11" width="1.02" height="1.02" fill="#6ecbf5"/><rect x="4" y="11" width="1.02" height="1.02" fill="#a6d8f2"/><rect x="5" y="11" width="1.02" height="1.02" fill="#a6d8f2"/><rect x="6" y="11" width="1.02" height="1.02" fill="#6ecbf5"/><rect x="7" y="11" width="1.02" height="1.02" fill="#8a6a44"/><rect x="8" y="11" width="1.02" height="1.02" fill="#fde0b8"/><rect x="9" y="11" width="1.02" height="1.02" fill="#000000"/><rect x="10" y="11" width="1.02" height="1.02" fill="#a9c0ec"/><rect x="11" y="11" width="1.02" height="1.02" fill="#a9c0ec"/><rect x="12" y="11" width="1.02" height="1.02" fill="#000000"/><rect x="13" y="11" width="1.02" height="1.02" fill="#9a8ee0"/><rect x="14" y="11" width="1.02" height="1.02" fill="#9a8ee0"/><rect x="15" y="11" width="1.02" height="1.02" fill="#000000"/><rect x="2" y="12" width="1.02" height="1.02" fill="#000000"/><rect x="3" y="12" width="1.02" height="1.02" fill="#b0b0b0"/><rect x="4" y="12" width="1.02" height="1.02" fill="#b0b0b0"/><rect x="5" y="12" width="1.02" height="1.02" fill="#b0b0b0"/><rect x="6" y="12" width="1.02" height="1.02" fill="#b0b0b0"/><rect x="7" y="12" width="1.02" height="1.02" fill="#b0b0b0"/><rect x="8" y="12" width="1.02" height="1.02" fill="#000000"/><rect x="9" y="12" width="1.02" height="1.02" fill="#a9c0ec"/><rect x="10" y="12" width="1.02" height="1.02" fill="#a9c0ec"/><rect x="11" y="12" width="1.02" height="1.02" fill="#000000"/><rect x="12" y="12" width="1.02" height="1.02" fill="#000000"/><rect x="13" y="12" width="1.02" height="1.02" fill="#9a8ee0"/><rect x="14" y="12" width="1.02" height="1.02" fill="#2f6fd8"/><rect x="15" y="12" width="1.02" height="1.02" fill="#000000"/><rect x="1" y="13" width="1.02" height="1.02" fill="#000000"/><rect x="2" y="13" width="1.02" height="1.02" fill="#b0b0b0"/><rect x="3" y="13" width="1.02" height="1.02" fill="#b0b0b0"/><rect x="4" y="13" width="1.02" height="1.02" fill="#b0b0b0"/><rect x="5" y="13" width="1.02" height="1.02" fill="#b0b0b0"/><rect x="6" y="13" width="1.02" height="1.02" fill="#b0b0b0"/><rect x="7" y="13" width="1.02" height="1.02" fill="#000000"/><rect x="8" y="13" width="1.02" height="1.02" fill="#a9c0ec"/><rect x="9" y="13" width="1.02" height="1.02" fill="#a9c0ec"/><rect x="10" y="13" width="1.02" height="1.02" fill="#9a8ee0"/><rect x="11" y="13" width="1.02" height="1.02" fill="#9a8ee0"/><rect x="12" y="13" width="1.02" height="1.02" fill="#9a8ee0"/><rect x="13" y="13" width="1.02" height="1.02" fill="#9a8ee0"/><rect x="14" y="13" width="1.02" height="1.02" fill="#9a8ee0"/><rect x="15" y="13" width="1.02" height="1.02" fill="#000000"/><rect x="1" y="14" width="1.02" height="1.02" fill="#000000"/><rect x="2" y="14" width="1.02" height="1.02" fill="#000000"/><rect x="3" y="14" width="1.02" height="1.02" fill="#000000"/><rect x="4" y="14" width="1.02" height="1.02" fill="#000000"/><rect x="5" y="14" width="1.02" height="1.02" fill="#000000"/><rect x="6" y="14" width="1.02" height="1.02" fill="#000000"/><rect x="7" y="14" width="1.02" height="1.02" fill="#a9c0ec"/><rect x="8" y="14" width="1.02" height="1.02" fill="#a9c0ec"/><rect x="9" y="14" width="1.02" height="1.02" fill="#2f6fd8"/><rect x="10" y="14" width="1.02" height="1.02" fill="#9a8ee0"/><rect x="11" y="14" width="1.02" height="1.02" fill="#2f6fd8"/><rect x="12" y="14" width="1.02" height="1.02" fill="#9a8ee0"/><rect x="13" y="14" width="1.02" height="1.02" fill="#2f6fd8"/><rect x="14" y="14" width="1.02" height="1.02" fill="#9a8ee0"/><rect x="15" y="14" width="1.02" height="1.02" fill="#000000"/><rect x="7" y="15" width="1.02" height="1.02" fill="#000000"/><rect x="8" y="15" width="1.02" height="1.02" fill="#000000"/><rect x="9" y="15" width="1.02" height="1.02" fill="#000000"/><rect x="10" y="15" width="1.02" height="1.02" fill="#000000"/><rect x="11" y="15" width="1.02" height="1.02" fill="#000000"/><rect x="12" y="15" width="1.02" height="1.02" fill="#000000"/><rect x="13" y="15" width="1.02" height="1.02" fill="#000000"/><rect x="14" y="15" width="1.02" height="1.02" fill="#000000"/><rect x="15" y="15" width="1.02" height="1.02" fill="#000000"/></svg>
<!-- icons -->
<svg style="position:absolute;left:97px;top:356.2px" width="60" height="60" viewBox="0 0 60 60"><path fill="#4a4a4a" d="M15.5,6 L43.5,6 Q47,6 49,9 L55,20 Q57,24 56.2,26 Q55.5,28 53,28 L41.8,28 L38,21 L34.2,28 L24.4,28 L20.6,21 L16.8,28 L6,28 Q3.5,28 3.5,25.5 Q3.5,23 5,20 L10,9 Q12,6 15.5,6Z"/><rect x="10" y="34" width="40.6" height="22" rx="2" fill="#4a4a4a"/><rect x="28.8" y="39" width="12.6" height="14.6" fill="#ffffff"/></svg>
<svg style="position:absolute;left:97px;top:476.8px" width="60" height="60" viewBox="0 0 60 60"><path fill="#4a4a4a" d="M4.6,40.2 Q4.6,38.3 6.5,38.3 L20.1,38.3 L20.1,28.1 Q20.1,26.2 22,26.2 L36.6,26.2 L36.6,17 Q36.6,15.1 38.5,15.1 L53.6,15.1 Q55.5,15.1 55.5,17 L55.5,52.4 Q55.5,54.3 53.6,54.3 L6.5,54.3 Q4.6,54.3 4.6,52.4Z"/><rect x="8.3" y="42.2" width="6.5" height="9.7" fill="#ffffff"/><rect x="23.2" y="30.6" width="6.5" height="10" fill="#ffffff"/><rect x="39.3" y="18.5" width="7" height="10" fill="#ffffff"/><path fill="#4a4a4a" d="M39,0.8 L50.6,0.8 L44.8,8.2Z"/></svg>
<svg style="position:absolute;left:97px;top:597.4px" width="60" height="60" viewBox="0 0 60 60"><path fill="#4a4a4a" d="M10,6.5 Q10,4.3 12.2,4.3 L48.4,4.3 Q50.6,4.3 50.6,6.5 L50.6,55.2 L46.5,55.2 L39,49 L32.5,55.2 L28,55.2 L21.5,49 L14,55.2 L10,55.2Z"/><path fill="none" stroke="#ffffff" stroke-width="4.8" d="M39,21 L26,21 Q21.5,21 21.5,25 Q21.5,29 26,29 L34,29 Q38.5,29 38.5,33 Q38.5,37.5 34,37.5 L20,37.5 M30,9.5 L30,19 M30,39.5 L30,45.5"/></svg>
<svg style="position:absolute;left:97px;top:718.0px" width="60" height="60" viewBox="0 0 60 60"><circle cx="21.8" cy="17.3" r="11.9" fill="#4a4a4a"/><path fill="#4a4a4a" d="M0.8,55.6 L0.8,46 Q0.8,35.3 12,35.3 L28.8,35.3 L28.8,55.6Z"/><path fill="none" stroke="#4a4a4a" stroke-width="4.6" d="M53.5,40 L53.5,30.5 Q53.5,26 49,26 L46,26 Q41.5,26 41.5,30.5 L41.5,32.5"/><rect x="34.2" y="39.6" width="23.7" height="16" rx="1.5" fill="#4a4a4a"/></svg>
<svg style="position:absolute;left:97px;top:838.6px" width="60" height="60" viewBox="0 0 60 60"><rect x="18.2" y="10" width="39.7" height="25.7" rx="2" fill="#4a4a4a"/><rect x="18.2" y="16.8" width="39.7" height="5.3" fill="#ffffff"/><path fill="none" stroke="#4a4a4a" stroke-width="4.5" stroke-linecap="round" d="M2.2,27 Q6,19 14.5,18.3"/><path fill="none" stroke="#4a4a4a" stroke-width="4.5" stroke-linecap="round" d="M13.5,34.7 L28,34.7"/><path fill="none" stroke="#4a4a4a" stroke-width="4.5" stroke-linecap="round" d="M4.8,49.5 L19,49.5 Q26,49.5 36,36"/></svg>
<svg style="position:absolute;left:97px;top:959.2px" width="60" height="60" viewBox="0 0 60 60"><path fill="none" stroke="#4a4a4a" stroke-width="4.5" d="M2.7,6.8 L12,6.8 Q14,6.8 14.3,9 L16.5,43 Q16.7,45.3 19,45.3 L48.2,45.3"/><path fill="#4a4a4a" d="M13.5,9.4 L55.8,9.4 L54.5,30 Q54,37.5 47,37.5 L16,37.5Z"/><circle cx="25.7" cy="55.9" r="3.8" fill="#4a4a4a"/><circle cx="44.8" cy="55.9" r="3.8" fill="#4a4a4a"/></svg>
<svg style="position:absolute;left:97px;top:1079.8px" width="60" height="60" viewBox="0 0 60 60"><circle cx="29.5" cy="17.5" r="12" fill="#4a4a4a"/><path fill="#4a4a4a" d="M8,53 Q8,37 29.5,37 Q51,37 51,53 Q51,56 48,56 L11,56 Q8,56 8,53Z"/></svg>
<svg style="position:absolute;left:97px;top:1200.4px" width="60" height="60" viewBox="0 0 60 60"><path fill="#4a4a4a" d="M19,12 Q19,9 22,9 L40,9 Q45,9 47,13 L50,20 Q57,22 57,28 L57,36 Q57,41 52,41 L19,41Z"/><path fill="none" stroke="#4a4a4a" stroke-width="4" stroke-linecap="round" d="M2,16 L26,16 M3,24.5 L24,24.5 M6,33 L22,33"/><circle cx="16.5" cy="44" r="8" fill="#4a4a4a"/><circle cx="16.5" cy="44" r="3.3" fill="#ffffff"/><circle cx="46" cy="44" r="8" fill="#4a4a4a"/><circle cx="46" cy="44" r="3.3" fill="#ffffff"/></svg>
<svg style="position:absolute;left:97px;top:1321.0px" width="60" height="60" viewBox="0 0 60 60"><rect x="19.5" y="2" width="21" height="8" rx="2" fill="#4a4a4a"/><path fill="#4a4a4a" d="M22,13 L38,13 Q54,30 54,45 Q54,58 40,58 L20,58 Q5,58 5,45 Q5,30 22,13Z"/><circle cx="22" cy="31" r="3.6" fill="#ffffff"/><circle cx="38" cy="47" r="3.6" fill="#ffffff"/><path stroke="#ffffff" stroke-width="4" stroke-linecap="round" d="M38,30 L22,48"/></svg>
<svg style="position:absolute;left:97px;top:1441.6px" width="60" height="60" viewBox="0 0 60 60"><path fill="#4a4a4a" d="M29,2 Q49,2 49,21 Q49,33 36,44 L29,50 L22,44 Q9,33 9,21 Q9,2 29,2Z"/><circle cx="29" cy="20" r="7" fill="#ffffff"/><rect x="10" y="52" width="37" height="5" rx="1.5" fill="#4a4a4a"/></svg>
<svg style="position:absolute;left:97px;top:1562.2px" width="60" height="60" viewBox="0 0 60 60"><rect x="2.7" y="9" width="55.2" height="42.6" rx="4" fill="#4a4a4a"/><rect x="2.7" y="26.5" width="55.2" height="6" fill="#ffffff"/><rect x="24.5" y="9" width="5" height="42.6" fill="#ffffff"/><path fill="#ffffff" d="M27,22 Q20,12 14,15 Q9,19 11,25 Q13,30 22,30 L13,37 Q11,40 14,40 L23,40 L27,34 L31,40 L40,40 Q43,40 41,37 L32,30 Q41,30 43,25 Q45,19 40,15 Q34,12 27,22Z"/><circle cx="18.4" cy="22" r="1.8" fill="#4a4a4a"/><circle cx="35.4" cy="22" r="1.8" fill="#4a4a4a"/><rect x="24.5" y="15" width="5" height="4" fill="#4a4a4a"/><rect x="24.5" y="36" width="5" height="3" fill="#4a4a4a"/></svg>
<svg style="position:absolute;left:97px;top:1682.8px" width="60" height="60" viewBox="0 0 60 60"><path fill="none" stroke="#4a4a4a" stroke-width="4.5" d="M44,11 Q37,6 28,6 Q6,6 5,30 Q6,54 30,55"/><path fill="#4a4a4a" d="M6,29 Q10,27 15,27 Q20,34 26,42 Q34,45 36,48 L37,56 Q33,57 28,56.5 Q8,53 5,33Z"/><path fill="#4a4a4a" d="M37,9 Q44,10 49,15 L40,31 Q36,33 33,31 Z"/><path fill="none" stroke="#4a4a4a" stroke-width="4" d="M60,34.5 L49,34.5 Q44,34.5 44,39.5 Q44,44.5 49,44.5 L54,44.5 Q59,44.5 59,49.5 Q59,54.5 54,54.5 L43,54.5"/><path fill="none" stroke="#4a4a4a" stroke-width="4" d="M54.5,27 L54.5,34 M52,55 L52,61"/></svg>
<svg style="position:absolute;left:97px;top:1803.4px" width="60" height="60" viewBox="0 0 60 60"><g fill="none" stroke="#4a4a4a" stroke-width="5"><rect x="7.5" y="8.5" width="16" height="16" rx="3"/><rect x="7.5" y="35.5" width="16" height="16" rx="3"/><rect x="35.5" y="35.5" width="16" height="16" rx="3"/></g><path stroke="#4a4a4a" stroke-width="5" d="M43.5,6 L43.5,27 M33,16.5 L54,16.5"/></svg>
<svg style="position:absolute;left:97px;top:1924.0px" width="60" height="60" viewBox="0 0 60 60"><path fill="none" stroke="#4a4a4a" stroke-width="3.4" d="M4.3,44 L4.3,7.8 L48.2,7.8"/><path fill="#4a4a4a" d="M12.4,15.8 L57.9,15.8 L57.9,34.3 L34.5,31 L37.5,52.6 L12.4,52.6Z"/><rect x="16.2" y="20.2" width="36.8" height="3.8" fill="#ffffff"/><path fill="#4a4a4a" d="M38.5,35.5 L56.5,41 L50,43.8 L56,50 L52.5,53.3 L46.5,47.2 L43.2,53.5Z"/></svg>
<svg style="position:absolute;left:97px;top:2044.6px" width="60" height="60" viewBox="0 0 60 60"><path fill="#4a4a4a" d="M22.5,23.5 L55.5,33.5 L46.5,40.5 L56,50.5 L52,55.5 L43,46.5 L35,55.5Z"/><path fill="none" stroke="#4a4a4a" stroke-width="4.5" d="M29.3,3.8 L29.3,17.6 M9,10 L17.8,18 M44.8,12 L38.5,18.6 M3.3,28.9 L17.2,28.9 M18.2,38.8 L12.2,45.3"/></svg>
<svg style="position:absolute;left:97px;top:2165.2px" width="60" height="60" viewBox="0 0 60 60"><path fill="none" stroke="#4a4a4a" stroke-width="4.5" d="M10.3,26 L10.3,44.5 L21,44.5 M26,15.2 L45.3,15.2 L45.3,47"/><circle cx="15.7" cy="17" r="12.3" fill="#4a4a4a"/><path fill="#4a4a4a" d="M19,56 L19,47 L33.6,28.5 L47.6,46 L47.6,56Z"/></svg>
<svg style="position:absolute;left:97px;top:2285.8px" width="60" height="60" viewBox="0 0 60 60"><path fill="#4a4a4a" d="M29,3 Q45,3 45,22 L45,33 Q55,40 55,45 Q55,49 50,49 L8,49 Q3,49 3,45 Q3,40 13,33 L13,22 Q13,3 29,3Z"/><path fill="none" stroke="#4a4a4a" stroke-width="4" d="M22,51 Q22,57 29,57 Q36,57 36,51"/></svg>
<svg style="position:absolute;left:97px;top:2406.4px" width="60" height="60" viewBox="0 0 60 60"><rect x="1.5" y="20" width="56.5" height="28" rx="2" fill="#4a4a4a"/><rect x="8.5" y="10.5" width="14.5" height="12" rx="1.5" fill="#4a4a4a"/><rect x="36.5" y="10.5" width="14.5" height="12" rx="1.5" fill="#4a4a4a"/></svg>
<!-- texts -->
<div class="t" style="left:108.2px;top:136.1px;font-size:61.5px;line-height:61.5px;font-weight:400;color:#0a120a;letter-spacing:-4.100px;-webkit-text-stroke:1.6px #24e32e">CS</div>
<div class="t" style="left:255.0px;top:113.5px;font-size:49px;line-height:49px;font-weight:700;color:#1f1f1f;letter-spacing:2.139px;">Cognitive Solutions</div>
<div class="t" style="left:195.5px;top:360.6px;font-size:48.5px;line-height:48.5px;font-weight:400;color:#1c1c1c;letter-spacing:1.875px;">Store details</div>
<div class="t" style="left:193.5px;top:481.2px;font-size:48.5px;line-height:48.5px;font-weight:400;color:#1c1c1c;letter-spacing:1.500px;">Plan</div>
<div class="t" style="left:193.5px;top:601.8px;font-size:48.5px;line-height:48.5px;font-weight:400;color:#1c1c1c;letter-spacing:2.250px;">Billing</div>
<div class="t" style="left:193.5px;top:722.4px;font-size:48.5px;line-height:48.5px;font-weight:400;color:#1c1c1c;letter-spacing:2.225px;">Users and permissions</div>
<div class="t" style="left:193.5px;top:843.0px;font-size:48.5px;line-height:48.5px;font-weight:400;color:#1c1c1c;letter-spacing:2.357px;">Payments</div>
<div class="t" style="left:195.5px;top:963.6px;font-size:48.5px;line-height:48.5px;font-weight:400;color:#1c1c1c;letter-spacing:2.500px;">Checkout</div>
<div class="t" style="left:195.5px;top:1084.2px;font-size:48.5px;line-height:48.5px;font-weight:400;color:#1c1c1c;letter-spacing:2.469px;">Customer accounts</div>
<div class="t" style="left:195.5px;top:1204.8px;font-size:48.5px;line-height:48.5px;font-weight:400;color:#1c1c1c;letter-spacing:2.075px;">Shipping and delivery</div>
<div class="t" style="left:196.5px;top:1325.4px;font-size:48.5px;line-height:48.5px;font-weight:400;color:#1c1c1c;letter-spacing:1.967px;">Taxes and duties</div>
<div class="t" style="left:193.5px;top:1446.0px;font-size:48.5px;line-height:48.5px;font-weight:400;color:#1c1c1c;letter-spacing:2.688px;">Locations</div>
<div class="t" style="left:195.5px;top:1566.6px;font-size:48.5px;line-height:48.5px;font-weight:400;color:#1c1c1c;letter-spacing:2.056px;">Gift cards</div>
<div class="t" style="left:193.5px;top:1687.2px;font-size:48.5px;line-height:48.5px;font-weight:400;color:#1c1c1c;letter-spacing:3.083px;">Markets</div>
<div class="t" style="left:197.5px;top:1807.8px;font-size:48.5px;line-height:48.5px;font-weight:400;color:#333333;letter-spacing:1.886px;">Apps and sales channels</div>
<div class="t" style="left:193.5px;top:1928.4px;font-size:48.5px;line-height:48.5px;font-weight:400;color:#1c1c1c;letter-spacing:2.250px;">Domains</div>
<div class="t" style="left:195.5px;top:2049.0px;font-size:48.5px;line-height:48.5px;font-weight:400;color:#1c1c1c;letter-spacing:2.179px;">Customer events</div>
<div class="t" style="left:193.5px;top:2169.6px;font-size:48.5px;line-height:48.5px;font-weight:400;color:#1c1c1c;letter-spacing:2.625px;">Brand</div>
<div class="t" style="left:193.5px;top:2290.2px;font-size:48.5px;line-height:48.5px;font-weight:400;color:#1c1c1c;letter-spacing:2.958px;">Notifications</div>
<div class="t" style="left:195.5px;top:2410.8px;font-size:48.5px;line-height:48.5px;font-weight:400;color:#1c1c1c;letter-spacing:1.950px;">Custom data</div>
<div class="t" style="left:1204.5px;top:92.0px;font-size:76px;line-height:76px;font-weight:700;color:#616161;letter-spacing:-0.250px;">App development</div>
<div class="t" style="left:1977.0px;top:92.0px;font-size:76px;line-height:76px;font-weight:700;color:#303030;letter-spacing:2.300px;">XYZ</div>
<div class="t" style="left:2190.5px;top:105.7px;font-size:47px;line-height:47px;font-weight:400;color:#555555;letter-spacing:1.000px;">Installed</div>
<div class="t" style="left:3513.5px;top:105.5px;font-size:47px;line-height:47px;font-weight:400;color:#1c1c1c;letter-spacing:0.833px;">Uninstall app</div>
<div class="t" style="left:1294.5px;top:341.8px;font-size:49.5px;line-height:49.5px;font-weight:700;color:#3d3d3d;letter-spacing:0.714px;">Overview</div>
<div class="t" style="left:1643.5px;top:341.8px;font-size:49.5px;line-height:49.5px;font-weight:700;color:#3d3d3d;letter-spacing:0.167px;">Configuration</div>
<div class="t" style="left:2093.5px;top:341.8px;font-size:49.5px;line-height:49.5px;font-weight:700;color:#3d3d3d;letter-spacing:-0.071px;">API credentials</div>
<div class="t" style="left:2573.5px;top:341.8px;font-size:49.5px;line-height:49.5px;font-weight:700;color:#3d3d3d;letter-spacing:-0.182px;">App settings</div>
<div class="t" style="left:1206.5px;top:560.0px;font-size:52.5px;line-height:52.5px;font-weight:700;color:#1c1c1c;letter-spacing:0.429px;">API credentials</div>
<div class="t" style="left:1265.5px;top:860.8px;font-size:49px;line-height:49px;font-weight:700;color:#1c1c1c;letter-spacing:0.190px;">Admin API access token</div>
<div class="t" style="left:1262.5px;top:965.8px;font-size:48.5px;line-height:48.5px;font-weight:400;color:#1c1c1c;letter-spacing:1.929px;">Use your access token to request data from the <span style="color:#0557d5;text-decoration:underline;text-decoration-color:#0a1fc9;text-decoration-thickness:2.5px;text-underline-offset:5.5px">Admin API</span>.</div>
<div class="t" style="left:1394.5px;top:1132.2px;font-size:48.5px;line-height:48.5px;font-weight:400;color:#55380c;letter-spacing:1.740px;">To protect your data, you’ll only be able to reveal your Admin API token once. Copy and save your</div>
<div class="t" style="left:1395.5px;top:1208.2px;font-size:48.5px;line-height:48.5px;font-weight:400;color:#55380c;letter-spacing:1.688px;">Admin API access token in a secure place.</div>
<div class="t" style="left:3310.5px;top:1396.3px;font-size:48.5px;line-height:48.5px;font-weight:400;color:#0557d5;letter-spacing:1.469px;">Reveal token once</div>
<div class="t" style="left:1265.0px;top:1510.0px;font-size:48.5px;line-height:48.5px;font-weight:400;color:#5c5c5c;letter-spacing:1.532px;">Created 27 Jan 2024 at 18:50 UTC</div>
<div class="t" style="left:1262.5px;top:1765.1px;font-size:48.5px;line-height:48.5px;font-weight:400;color:#1c1c1c;letter-spacing:1.862px;">Keep your access tokens secure. Only share them with developers that you trust to safely access your data.</div>
<div class="t" style="left:1447.5px;top:1935.2px;font-size:48.5px;line-height:48.5px;font-weight:400;color:#0557d5;letter-spacing:2.067px;"><span style="text-decoration:underline;text-decoration-color:#0a1fc9;text-decoration-thickness:2.5px;text-underline-offset:5.5px">Authenticate with access tokens</span></div>
<div class="t" style="left:1445.5px;top:2136.5px;font-size:48.5px;line-height:48.5px;font-weight:400;color:#0557d5;letter-spacing:1.938px;"><span style="text-decoration:underline;text-decoration-color:#0a1fc9;text-decoration-thickness:2.5px;text-underline-offset:5.5px">Start using the Admin API</span></div>
<div class="t" style="left:1445.5px;top:2337.8px;font-size:48.5px;line-height:48.5px;font-weight:400;color:#0557d5;letter-spacing:1.897px;"><span style="text-decoration:underline;text-decoration-color:#0a1fc9;text-decoration-thickness:2.5px;text-underline-offset:5.5px">Start using the Storefront API</span></div>
</body></html>
